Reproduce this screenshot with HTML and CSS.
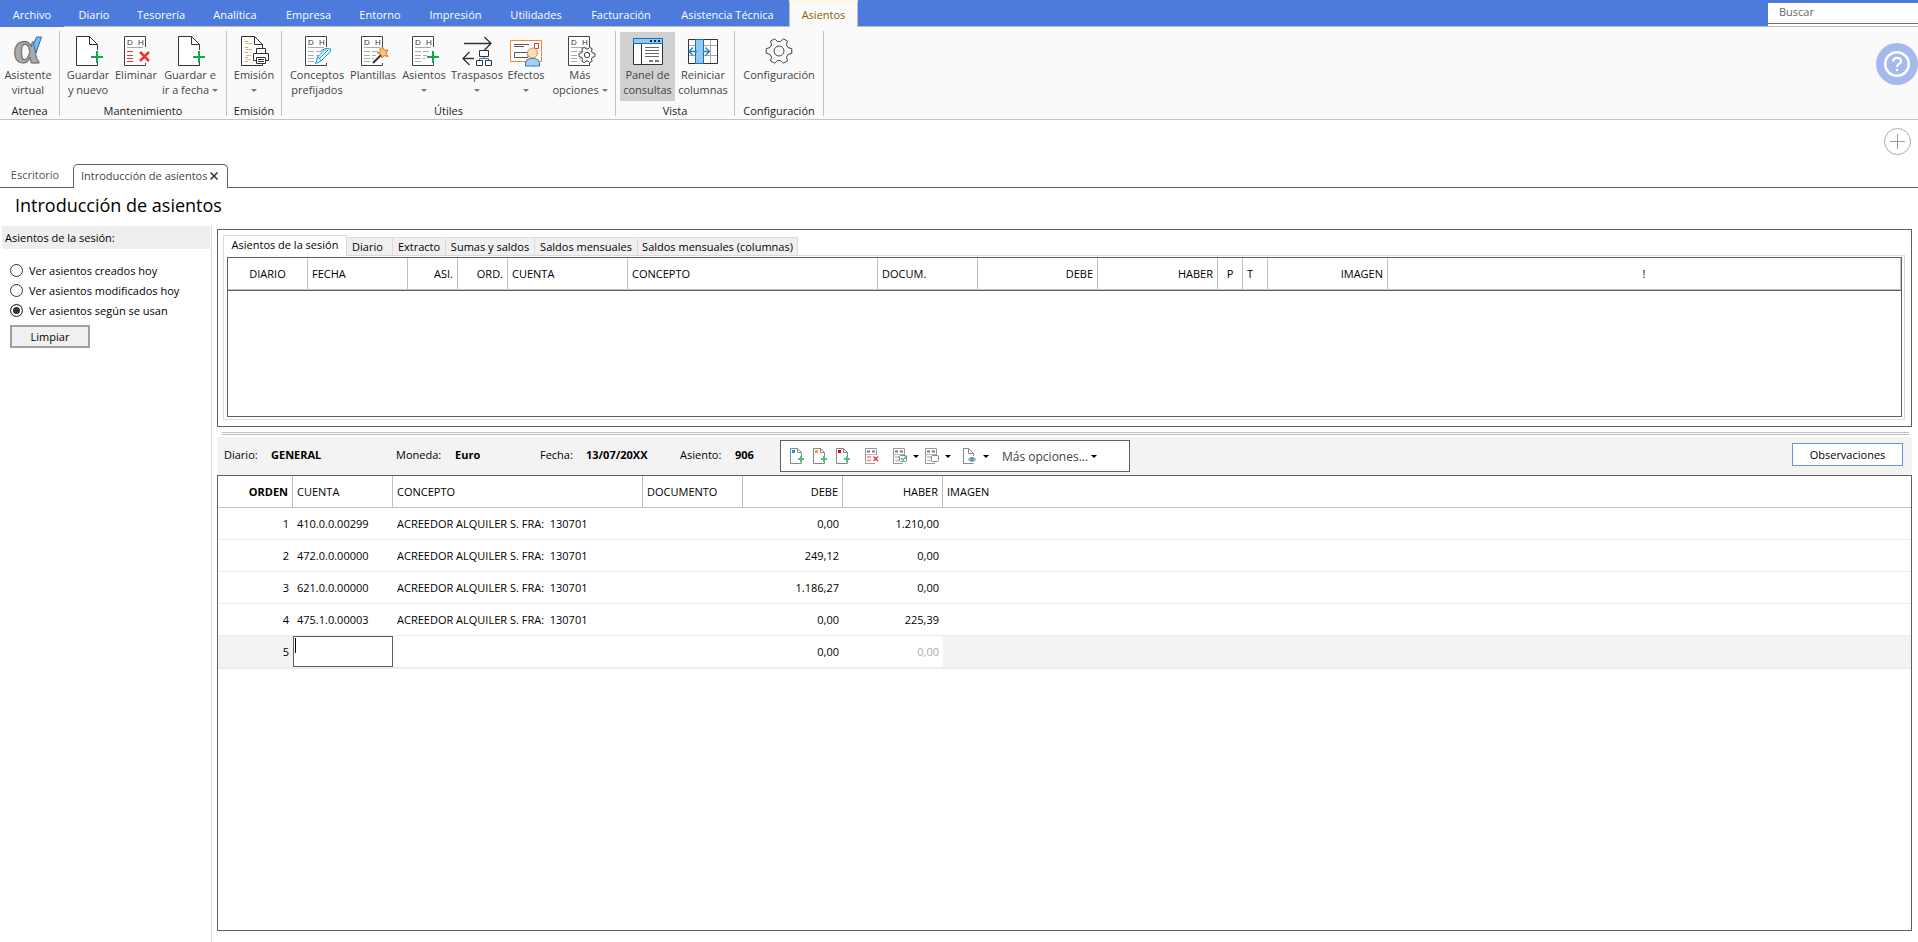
FILE: index.html
```html
<!DOCTYPE html>
<html lang="es">
<head>
<meta charset="utf-8">
<title>Introducción de asientos</title>
<link rel="stylesheet" href="styles.css">
</head>
<body>
<svg class="defs" aria-hidden="true">
  <symbol id="page" viewBox="0 0 32 32">
    <path d="M25.5 15V9.500L17.500 1.500H4.500V30.500H25.500V28M17.500 1.500V9.500H25.500" fill="#fff" stroke="#333"/>
  </symbol>
  <symbol id="ledger" viewBox="0 0 32 32">
    <path d="M25.500 12V1.500H4.500V30.500H25.500V28" fill="#fff" stroke="#444"/>
    <text x="7" y="10" class="ico-text">D</text><text x="18" y="10" class="ico-text">H</text>
    <path d="M7 12.500H23" stroke="#aaa"/>
  </symbol>
  <symbol id="lines" viewBox="0 0 32 32">
    <path d="M7 16.500H13M7 20.500H13M7 23.500H13M7 26.500H13M15 16.500H21M15 20.500H19M15 23.500H17" stroke="#aaa"/>
  </symbol>
  <symbol id="plus" viewBox="0 0 32 32"><path d="M25 16V28M19 22H31" stroke="#12a84c" stroke-width="2"/></symbol>
  <symbol id="gear" viewBox="-14 -14 28 28">
    <path d="M9-3.500 12.800-2.300V2.300L9 3.500 7.500 6 8.400 9.900 4.400 12.200 1.500 9.500H-1.500L-4.400 12.200-8.400 9.900-7.500 6-9 3.500-12.800 2.300V-2.300L-9-3.500-7.500-6-8.400-9.900-4.400-12.200-1.500-9.500H1.500L4.400-12.200 8.400-9.900 7.500-6Z" fill="#fafafa" stroke="#444" stroke-linejoin="round"/>
    <circle r="5" fill="none" stroke="#444"/>
  </symbol>
  <symbol id="mini-page" viewBox="0 0 16 17">
    <path d="M11.500 9V4.500L7.500.500H.500V15.500H11.500V14M7.500 .500V4.500H11.500" fill="#fff" stroke="#888"/>
  </symbol>
  <symbol id="mini-plus" viewBox="0 0 16 17"><path d="M11 8V14M8 11H14" stroke="#4fc07c" stroke-width="2"/></symbol>
  <symbol id="mini-ledger" viewBox="0 0 16 17">
    <path d="M11.500 7V.500H.500V15.500H10" fill="#fff" stroke="#999"/>
    <path d="M2 3.500H5M7 3.500H10" stroke="#777" stroke-width="2"/><path d="M1 6.500H11" stroke="#bbb"/>
  </symbol>
</svg>

<header class="menubar">
  <nav class="menu">
    <button class="menu-item">Archivo</button>
    <button class="menu-item">Diario</button>
    <button class="menu-item">Tesorería</button>
    <button class="menu-item">Analítica</button>
    <button class="menu-item">Empresa</button>
    <button class="menu-item">Entorno</button>
    <button class="menu-item">Impresión</button>
    <button class="menu-item">Utilidades</button>
    <button class="menu-item">Facturación</button>
    <button class="menu-item">Asistencia Técnica</button>
    <button class="menu-item menu-active">Asientos</button>
  </nav>
  <div class="search"><input type="text" placeholder="Buscar" aria-label="Buscar"></div>
</header>

<section class="ribbon">
  <div class="group g-atenea">
    <div class="tools">
      <button class="tool"><svg viewBox="0 0 32 32"><text x="1" y="28" class="alpha">α</text><path d="M21.500 9 24.500 2H29.500L24 18Z" fill="#7db9e8" stroke="#2a6db0"/></svg><span>Asistente<br>virtual</span></button>
    </div>
    <div class="group-name">Atenea</div>
  </div>
  <div class="group g-mant">
    <div class="tools">
      <button class="tool"><svg viewBox="0 0 32 32"><use href="#page"/><use href="#plus"/></svg><span>Guardar<br>y nuevo</span></button>
      <button class="tool"><svg viewBox="0 0 32 32"><use href="#ledger"/><path d="M7 16.500H13M7 20.500H13M7 23.500H13M7 26.500H13" stroke="#e33"/><path d="M20 17 29 26M29 17 20 26" stroke="#ee3338" stroke-width="2.500"/></svg><span>Eliminar</span></button>
      <button class="tool"><svg viewBox="0 0 32 32"><use href="#page"/><use href="#plus"/></svg><span>Guardar e<br>ir a fecha <i class="caret"></i></span></button>
    </div>
    <div class="group-name">Mantenimiento</div>
  </div>
  <div class="group g-emi">
    <div class="tools">
      <button class="tool"><svg viewBox="0 0 32 32"><use href="#page" x="-1"/><path d="M7 6.500H10M7 12.500H10M7 17.500H10M7 22.500H10M7 26.500H10" stroke="#f29a2e"/><path d="M8 8.500H14M8 14.500H14M8 20.500H13M8 24.500H13" stroke="#bbb"/><path d="M18.500 18V13.500H27.500V18M18.500 25.500H15.500V18.500H30.500V25.500H27.500M18.500 22.500H27.500V28.500H18.500ZM20 24.500H26M20 26.500H26" fill="#fff" stroke="#333"/></svg><span>Emisión<br><i class="caret"></i></span></button>
    </div>
    <div class="group-name">Emisión</div>
  </div>
  <div class="group g-util">
    <div class="tools">
      <button class="tool"><svg viewBox="0 0 32 32"><use href="#ledger"/><use href="#lines"/><path d="M14.500 28.500 17 21.500 25 13.500 30 14 29 17 20 26ZM18 24 27 15M17 21.500 20 25.500M25 13.500 20 15.500" fill="#e4f5fd" stroke="#1a9bd7"/></svg><span>Conceptos<br>prefijados</span></button>
      <button class="tool"><svg viewBox="0 0 32 32"><use href="#ledger"/><use href="#lines"/><path d="M16 28 25 19" stroke="#333" stroke-width="2"/><path d="M26 12.500 27.500 15.500 31 15 29 18 31 21.500 27 20.500 25 23 24 19.500 20.500 18 23.500 16.500 23 13.500Z" fill="#fbc474" stroke="#e8702a"/></svg><span>Plantillas</span></button>
      <button class="tool"><svg viewBox="0 0 32 32"><use href="#ledger"/><use href="#lines"/><use href="#plus"/></svg><span>Asientos<br><i class="caret"></i></span></button>
      <button class="tool"><svg viewBox="0 0 32 32"><path d="M3 8.500H30M23.500 2 30 8.500 23.500 15M8.500 17 2 23.500 8.500 30M2 23.500H13" fill="none" stroke="#333" stroke-width="1.300"/><path d="M23 22V24M18.500 26V23.500H27.500V26" fill="none" stroke="#2a7fc9"/><path d="M18.500 15.500H27.500V21.500H18.500ZM15.500 25.500H21.500V30.500H15.500ZM24.500 25.500H30.500V30.500H24.500Z" fill="#fff" stroke="#333"/></svg><span>Traspasos<br><i class="caret"></i></span></button>
      <button class="tool"><svg viewBox="0 0 32 32"><path d="M.500 5.500H31.500V26.500H.500Z" fill="#fff" stroke="#ee8a35"/><path d="M4 9.500H19M4 11.500H14M4.500 17.500H18V22.500H4.500Z" fill="none" stroke="#555"/><path d="M24.500 8.500H28.500V13.500H24.500Z" fill="#fff" stroke="#e33"/><path d="M15.500 31V28Q16 24 20 23.500H25Q29 24 29.500 28V31Z" fill="#a5cfee" stroke="#2a7fc9"/><circle cx="22.500" cy="18" r="5" fill="#fbdcb8" stroke="#d99058"/></svg><span>Efectos<br><i class="caret"></i></span></button>
      <button class="tool"><svg viewBox="0 0 32 32"><use href="#ledger"/><use href="#lines"/><g transform="translate(23 20)"><path d="M5-2.500 8-1.500V1.500L5 2.500 4.500 4 5.200 6.200 2.700 7.700 1 6H-1L-2.700 7.700-5.200 6.200-4.500 4-5 2.500-8 1.500V-1.500L-5-2.500-4.500-4-5.200-6.200-2.700-7.700-1-6H1L2.700-7.700 5.200-6.200 4.500-4Z" fill="#fafafa" stroke="#444"/><circle r="2.700" fill="#fff" stroke="#444"/></g></svg><span>Más<br>opciones <i class="caret"></i></span></button>
    </div>
    <div class="group-name">Útiles</div>
  </div>
  <div class="group g-vista">
    <div class="tools">
      <button class="tool pressed"><svg viewBox="0 0 32 32"><path d="M1.500 3.500H30.500V29.500H1.500Z" fill="#fff" stroke="#333"/><path d="M1.500 3.500H30.500V8.500H1.500Z" fill="#90c8f0" stroke="#1671b8"/><path d="M18 6H20M22 6H24M26 6H28" stroke="#222" stroke-width="2"/><path d="M9.500 9V29" stroke="#333"/><path d="M13 12.500H27M13 15.500H27M13 18.500H27M13 21.500H27" stroke="#666"/><path d="M17 26H21M23 26H27" stroke="#777" stroke-width="2"/></svg><span>Panel de<br>consultas</span></button>
      <button class="tool"><svg viewBox="0 0 32 32"><path d="M1.500 4.500H30.500V28.500H1.500Z" fill="#fff" stroke="#333"/><path d="M2 10.500H30M2 20.500H30M23.500 5V28" stroke="#aaa"/><path d="M8.500 4.500H16.500V28.500H8.500Z" fill="#90c8f0" stroke="#1671b8"/><path d="M10 16.500H2M6 12.500 2 16.500 6 20.500M16 16.500H22.500M18.500 12.500 22.500 16.500 18.500 20.500" fill="none" stroke="#1a82cc" stroke-width="1.300"/></svg><span>Reiniciar<br>columnas</span></button>
    </div>
    <div class="group-name">Vista</div>
  </div>
  <div class="group g-conf">
    <div class="tools">
      <button class="tool"><svg viewBox="0 0 32 32"><use href="#gear" x="2" y="2" width="28" height="28"/></svg><span>Configuración</span></button>
    </div>
    <div class="group-name">Configuración</div>
  </div>
  <button class="help" aria-label="Ayuda"><svg viewBox="0 0 42 42"><circle cx="21" cy="21" r="21" fill="#a4baec"/><g fill="none" stroke="#fff" stroke-width="2.500"><circle cx="21" cy="21" r="11.800"/><path d="M17.200 18.500C17.200 13.500 25 13.800 25 18.200 25 21 21 20.800 21 24" stroke-width="2.300"/></g><circle cx="21" cy="27" r="1.300" fill="#fff"/></svg></button>
</section>

<div class="tabstrip">
  <div class="tabstrip-tools"><button class="add" aria-label="Añadir"><svg viewBox="0 0 27 27"><path d="M13.500 6V21M6 13.500H21" stroke="#999"/><circle cx="13.500" cy="13.500" r="13" fill="none" stroke="#aaa"/></svg></button></div>
  <div class="page-tabs">
    <button class="page-tab">Escritorio</button>
    <button class="page-tab page-active">Introducción de asientos<svg viewBox="0 0 8 8"><path d="M.500.500 7.500 7.500M7.500.500.500 7.500" stroke="#333" stroke-width="1.500"/></svg></button>
  </div>
</div>

<h1 class="title">Introducción de asientos</h1>

<main class="workspace">
  <aside class="sidebar">
    <h2 class="side-title">Asientos de la sesión:</h2>
    <div class="side-body">
      <label class="radio"><input type="radio" name="ver">Ver asientos creados hoy</label>
      <label class="radio"><input type="radio" name="ver">Ver asientos modificados hoy</label>
      <label class="radio"><input type="radio" name="ver" checked>Ver asientos según se usan</label>
      <button class="clear">Limpiar</button>
    </div>
  </aside>

  <div class="content">
    <section class="query">
      <div class="query-tabs">
        <button class="qtab qtab-active">Asientos de la sesión</button>
        <button class="qtab qt-diario">Diario</button>
        <button class="qtab qt-extracto">Extracto</button>
        <button class="qtab qt-sumas">Sumas y saldos</button>
        <button class="qtab qt-saldos">Saldos mensuales</button>
        <button class="qtab qt-columnas">Saldos mensuales (columnas)</button>
      </div>
      <div class="query-pane">
        <div class="query-grid">
          <table class="grid session">
            <colgroup><col class="w80"><col class="w100"><col class="w50"><col class="w50"><col class="w120"><col class="w250"><col class="w100"><col class="w120"><col class="w120"><col class="w25"><col class="w25"><col class="w120"><col></colgroup>
            <thead><tr><th class="mid">DIARIO</th><th>FECHA</th><th class="num">ASI.</th><th class="num">ORD.</th><th>CUENTA</th><th>CONCEPTO</th><th>DOCUM.</th><th class="num">DEBE</th><th class="num">HABER</th><th class="mid">P</th><th>T</th><th class="num">IMAGEN</th><th class="mid">!</th></tr></thead>
          </table>
        </div>
      </div>
    </section>

    <div class="splitter"></div>

    <section class="entrybar">
      <div class="fields">
        <span>Diario:</span><b>GENERAL</b>
        <span>Moneda:</span><b>Euro</b>
        <span>Fecha:</span><b>13/07/20XX</b>
        <span>Asiento:</span><b>906</b>
      </div>
      <div class="entry-tools">
        <button aria-label="Nuevo apunte"><svg viewBox="0 0 16 17"><use href="#mini-page"/><path d="M2 2H5V5H2Z" fill="#0a9be8"/><use href="#mini-plus"/></svg></button>
        <button aria-label="Insertar apunte"><svg viewBox="0 0 16 17"><use href="#mini-page"/><path d="M2 2H5V5H2Z" fill="#f5a623"/><use href="#mini-plus"/></svg></button>
        <button aria-label="Duplicar apunte"><svg viewBox="0 0 16 17"><use href="#mini-page"/><path d="M2 2H5V5H2Z" fill="#e3001b"/><use href="#mini-plus"/></svg></button>
        <button aria-label="Eliminar apunte"><svg viewBox="0 0 16 17"><use href="#mini-ledger"/><path d="M2 9H6M2 12.500H6" stroke="#f99" stroke-width="2"/><path d="M8.500 8.500 13 13M13 8.500 8.500 13" stroke="#e8383b" stroke-width="1.500"/></svg></button>
        <button aria-label="Marcar"><svg viewBox="0 0 16 17"><use href="#mini-ledger"/><path d="M2 9H6M2 12.500H6" stroke="#ccc" stroke-width="2"/><rect x="6.500" y="7.500" width="7" height="6" rx="1" fill="#fff" stroke="#888"/><path d="M8 10 10 12 13.500 8" fill="none" stroke="#3cb873" stroke-width="1.300"/></svg><i class="caret"></i></button>
        <button aria-label="Desmarcar"><svg viewBox="0 0 16 17"><use href="#mini-ledger"/><path d="M2 9H6M2 12.500H6" stroke="#ccc" stroke-width="2"/><rect x="6.500" y="7.500" width="7" height="6" rx="1" fill="#fff" stroke="#888"/></svg><i class="caret"></i></button>
        <button aria-label="Ver documento"><svg viewBox="0 0 16 17"><path d="M10.500 8V5.500L5.500.500H.500V15.500H10.500M5.500 .500V5.500H10.500" fill="#fff" stroke="#888"/><path d="M5 11.500Q9 7 13 11.500 9 15.500 5 11.500" fill="#b8d4ee" stroke="#8ab"/><circle cx="9" cy="11.300" r="2" fill="#4a97d2"/></svg><i class="caret"></i></button>
        <button class="more">Más opciones... <i class="caret"></i></button>
      </div>
      <button class="notes">Observaciones</button>
    </section>

    <section class="entries">
      <table class="grid">
        <colgroup><col class="w75"><col class="w100"><col class="w250"><col class="w100"><col class="w100"><col class="w100"><col></colgroup>
        <thead><tr><th class="num strong">ORDEN</th><th>CUENTA</th><th>CONCEPTO</th><th>DOCUMENTO</th><th class="num">DEBE</th><th class="num">HABER</th><th>IMAGEN</th></tr></thead>
        <tbody>
          <tr><td class="num">1</td><td>410.0.0.00299</td><td>ACREEDOR ALQUILER S. FRA:&nbsp; 130701</td><td></td><td class="num">0,00</td><td class="num">1.210,00</td><td></td></tr>
          <tr><td class="num">2</td><td>472.0.0.00000</td><td>ACREEDOR ALQUILER S. FRA:&nbsp; 130701</td><td></td><td class="num">249,12</td><td class="num">0,00</td><td></td></tr>
          <tr><td class="num">3</td><td>621.0.0.00000</td><td>ACREEDOR ALQUILER S. FRA:&nbsp; 130701</td><td></td><td class="num">1.186,27</td><td class="num">0,00</td><td></td></tr>
          <tr><td class="num">4</td><td>475.1.0.00003</td><td>ACREEDOR ALQUILER S. FRA:&nbsp; 130701</td><td></td><td class="num">0,00</td><td class="num">225,39</td><td></td></tr>
          <tr class="editing"><td class="num shade">5</td><td class="edit"><div class="edit-box"><i class="cursor"></i><input type="text" aria-label="Cuenta"></div></td><td></td><td></td><td class="num">0,00</td><td class="num faint">0,00</td><td class="shade"></td></tr>
        </tbody>
      </table>
    </section>
  </div>
</main>
</body>
</html>
```

FILE: styles.css
```css
* { box-sizing: border-box; }

body {
  margin: 0;
  min-height: 100vh;
  display: flex;
  flex-direction: column;
  background: #fff;
  color: #000;
  font: 11px/15px "Open Sans", "Noto Sans", sans-serif;
}

button, input { font: inherit; color: inherit; }

button {
  margin: 0;
  padding: 0;
  border: 0;
  background: none;
  white-space: nowrap;
}

svg { display: block; flex: none; }

.defs { display: none; }

.caret {
  display: inline-block;
  border: 3px solid transparent;
  border-top-color: currentColor;
  border-bottom: 0;
  vertical-align: 2px;
}

/* Menu bar */
.menubar {
  display: flex;
  justify-content: space-between;
  height: 27px;
  background: #4c7bdc;
  border-bottom: 1px solid #c0c0c0;
}

.menu {
  display: grid;
  grid-template-columns: 64px 60px 74px 74px 73px 70px 81px 80px 90px 123px 69px;
}

.menu-item { height: 26px; padding-top: 2px; color: #fff; }
.menu-item:first-child { height: 27px; background: #4c7bdc; }

.menu-active {
  height: 27px;
  padding: 0 0 1px;
  border: 1px solid #c0c0c0;
  border-top: 3px solid #fdf8e4;
  border-bottom: 0;
  background: #fafafa;
  color: #8a6200;
}

.search { width: 150px; padding-top: 3px; }

.search input {
  display: block;
  width: 100%;
  height: 21px;
  padding: 0 11px 3px;
  border: 0;
  border-bottom: 1px solid #707070;
  border-radius: 0;
  background: #fff;
  outline: 0;
  box-shadow: 0 2px #fff;
}

.search input::placeholder { color: #666; opacity: 1; }

/* Ribbon */
.ribbon {
  display: flex;
  height: 93px;
  padding: 4px 0 3px;
  background: #fafafa;
  border-bottom: 1px solid #c4c4c4;
}

.group {
  display: flex;
  flex-direction: column;
  padding-top: 1px;
  border-right: 1px solid #c4c4c4;
}

.g-atenea { width: 60px; }
.g-mant { width: 167px; }
.g-emi { width: 55px; }
.g-util { width: 334px; }
.g-vista { width: 119px; }
.g-conf { width: 89px; }

.tools { display: grid; padding: 0 4px; }
.g-atenea .tools { padding: 0 3px 0 0; }
.g-mant .tools { grid-template-columns: 48px 48px 60px; }
.g-util .tools { grid-template-columns: 62px 50px 52px 54px 44px 64px; }
.g-vista .tools { grid-template-columns: 55px 56px; }

.tool {
  display: flex;
  flex-direction: column;
  align-items: center;
  height: 69px;
  padding-top: 3px;
  color: #444;
}

.tool svg { width: 32px; height: 32px; }
.pressed { background: #d0d0d0; }
.tool .caret { color: #777; }

.group-name { padding-top: 2px; text-align: center; color: #222; }

.ico-text { font: 8px "Liberation Sans", sans-serif; fill: #333; }
.alpha { font: bold 47px "Liberation Serif", serif; fill: #aaa; stroke: #666; }

.help { align-self: flex-start; margin: 12px 0 0 auto; }
.help svg { width: 42px; height: 42px; }

/* Page tabs */
.tabstrip { border-bottom: 1px solid #606060; }

.tabstrip-tools {
  display: flex;
  justify-content: flex-end;
  height: 44px;
  padding: 8px 7px 0;
}

.add { align-self: flex-start; }
.add svg { width: 27px; height: 27px; }

.page-tabs { display: flex; height: 23px; }
.page-tab { width: 73px; padding: 0 3px 2px 0; color: #555; }

.page-active {
  display: flex;
  align-items: center;
  justify-content: space-between;
  width: 155px;
  height: 24px;
  padding: 0 9px 2px 7px;
  border: 1px solid #606060;
  border-bottom: 0;
  border-radius: 5px 5px 0 0;
  background: #fff;
  color: #444;
}

.page-active svg { width: 8px; height: 8px; }

.title {
  margin: 0;
  height: 38px;
  padding-left: 15px;
  font-size: 18px;
  font-weight: 400;
  line-height: 34px;
}

/* Workspace */
.workspace { flex: 1; display: flex; }

.sidebar {
  width: 212px;
  padding: 0 1px 0 2px;
  border-right: 1px solid #dcdcdc;
}

.side-title {
  margin: 0;
  padding-left: 3px;
  background: #eee;
  font-size: 11px;
  font-weight: 400;
  line-height: 23px;
}

.side-body {
  display: flex;
  flex-direction: column;
  align-items: flex-start;
  padding: 11px 8px;
}

.radio { display: flex; align-items: center; gap: 6px; height: 20px; }

.radio input {
  appearance: none;
  width: 13px;
  height: 13px;
  margin: 0;
  border: 1px solid #333;
  border-radius: 50%;
  background: #fff;
}

.radio input:checked {
  border-color: #333;
  background: #333;
  box-shadow: inset 0 0 0 2px #fff;
}

.clear {
  width: 80px;
  height: 23px;
  margin-top: 5px;
  border: 2px solid #a0a0a0;
  background: #f0f0f0;
}

.content {
  flex: 1;
  min-width: 0;
  display: flex;
  flex-direction: column;
  padding: 3px 6px 11px 5px;
}

/* Query panel */
.query {
  padding: 5px 6px 6px 5px;
  border: 1px solid #606060;
}

.query-tabs { display: flex; align-items: flex-end; height: 20px; }

.qtab {
  height: 18px;
  border: 1px solid #dadada;
  border-width: 1px 1px 0 0;
  background: #f0f0f0;
}

.qtab-active {
  width: 124px;
  height: 21px;
  margin-bottom: -1px;
  padding-bottom: 3px;
  border-width: 1px 1px 0;
  background: #fff;
}

.qt-diario { width: 46px; padding-right: 4px; }
.qt-extracto { width: 53px; }
.qt-sumas { width: 89px; }
.qt-saldos { width: 103px; }
.qt-columnas { width: 160px; }

.query-pane {
  padding: 1px 2px 2px 3px;
  border: 1px solid #dadada;
}

.query-grid { min-height: 160px; border: 1px solid #606060; }

.grid {
  width: 100%;
  table-layout: fixed;
  border-collapse: separate;
  border-spacing: 0;
}

.grid th, .grid td {
  height: 32px;
  padding: 0 4px;
  text-align: left;
  font-weight: 400;
  white-space: nowrap;
}

.grid th { border: 1px solid #c0c0c0; border-width: 0 1px 1px 0; }
.grid td { border-bottom: 1px solid #ececec; }
.grid .num { text-align: right; }
.grid .mid { text-align: center; }
.grid .strong { font-weight: 700; }

.session { border-bottom: 1px solid #606060; }

.w25 { width: 25px; }
.w50 { width: 50px; }
.w75 { width: 75px; }
.w80 { width: 80px; }
.w100 { width: 100px; }
.w120 { width: 120px; }
.w250 { width: 250px; }

.splitter {
  height: 3px;
  margin: 5px 3px 2px 5px;
  border: 1px solid #c0c0c0;
  border-width: 1px 0;
}

/* Entry bar */
.entrybar {
  display: flex;
  align-items: center;
  height: 38px;
  padding: 0 9px 0 7px;
  background: #f3f3f3;
}

.fields {
  display: grid;
  grid-template-columns: 47px 125px 59px 85px 46px 94px 55px 45px;
  padding-bottom: 3px;
}

.entry-tools {
  display: grid;
  grid-template-columns: 23px 23px 29px 28px 32px 38px 39px auto;
  justify-content: start;
  align-items: center;
  width: 350px;
  height: 32px;
  padding-left: 9px;
  border: 1px solid #606060;
  background: #fff;
}

.entry-tools button { display: flex; align-items: center; gap: 4px; }
.entry-tools svg { width: 16px; height: 17px; }

.entry-tools .more { gap: 3px; color: #444; font-size: 12px; }
.more .caret { color: #000; }

.notes {
  width: 111px;
  height: 23px;
  margin: 0 0 3px auto;
  border: 1px solid #6a93dc;
  background: #fff;
}

/* Entries */
.entries { flex: 1; border: 1px solid #606060; }
.entries th:last-child { border-right: 0; }
.grid .editing td { height: 33px; border-bottom-width: 2px; }
.grid .shade { background: #f3f3f3; }
.grid .faint { color: #aaa; }
.grid .edit { padding: 0; }

.edit-box {
  display: flex;
  align-items: flex-start;
  height: 31px;
  padding: 1px;
  border: 1px solid #606060;
}

.edit-box input {
  width: 100%;
  min-width: 0;
  padding: 0;
  border: 0;
  outline: 0;
  background: transparent;
}

.cursor { flex: none; width: 1px; height: 15px; background: #000; }
```
